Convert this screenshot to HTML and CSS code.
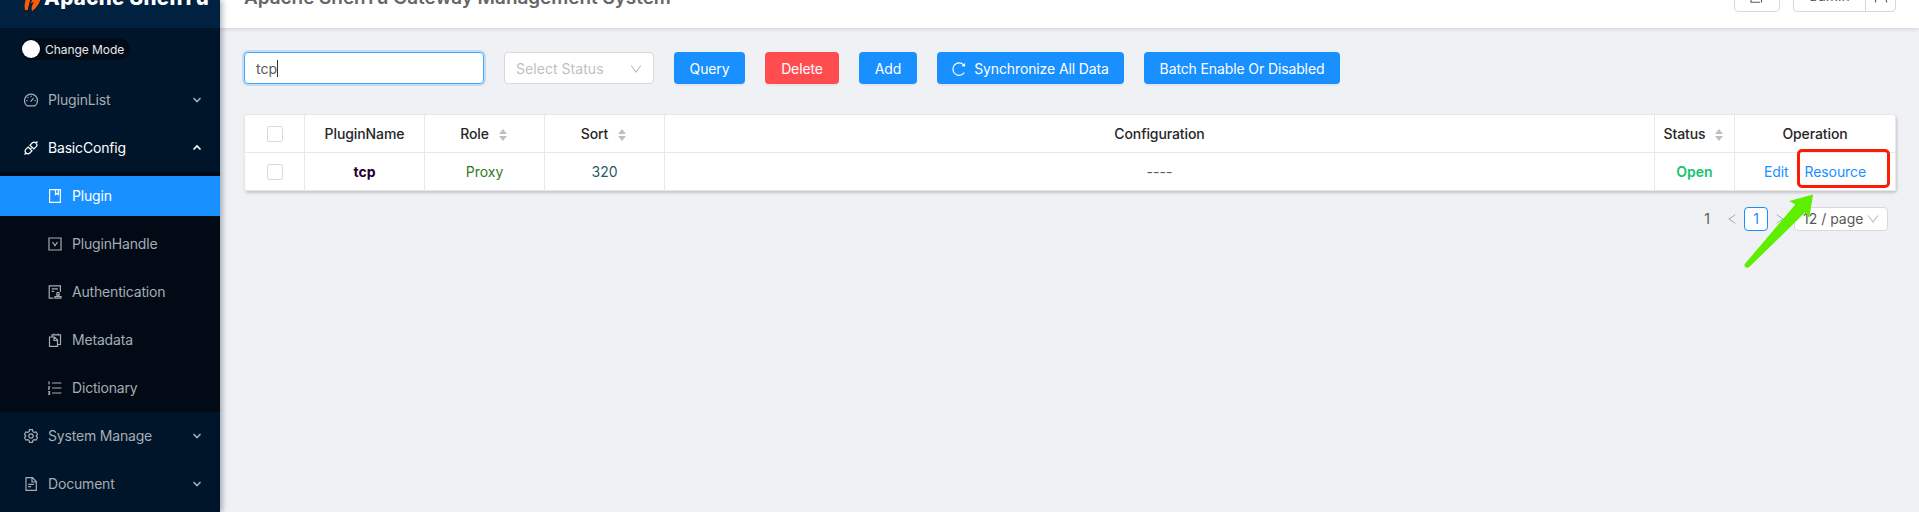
FILE: index.html
```html
<!DOCTYPE html>
<html lang="en">
<head>
<meta charset="utf-8">
<title>Apache ShenYu Gateway Management System</title>
<link rel="stylesheet" href="styles.css">
</head>
<body>
<div class="app">
  <aside class="sidebar">
    <div class="logo">
      <svg class="logo-mark" width="18" height="32" viewBox="0 0 18 32"><path d="M1 31C-.5 24 2 17 8 13L14 1l3 15c0 6-3 12-9 16-1-3 0-6 2-9-4 1-6 4-6 8z" fill="#ff5c00"/><path d="M5.500 30c-.5-5 1-9 4-12" stroke="#002140" stroke-width="1.500" fill="none"/></svg>
      <span class="logo-text">Apache ShenYu</span>
    </div>
    <div class="mode"><span class="knob"></span><span class="mode-text">Change Mode</span></div>
    <nav class="menu">
      <div class="item"><svg class="ico" viewBox="0 0 14 14"><path d="M3 12.800A6.500 6.500 0 1 1 11 12.800Z"/><path d="M6.500 8.700 9.700 5.200M7 2.800v1.200M3.600 4.200l.8.800M2.300 7.700h1.300M10.600 7.700h1.200"/></svg><span class="label">PluginList</span><svg class="chev" viewBox="0 0 10 10"><path d="M1.500 3 5 6.500 8.500 3"/></svg></div>
      <div class="item open"><svg class="ico" viewBox="0 0 14 14"><path d="M6 4.200 8.200 2a2.600 2.600 0 0 1 3.800 3.800L9.800 8Z M4.200 6 8 9.800 5.800 12A2.600 2.600 0 0 1 2 8.200Z M12 2l1.500-1.500M2 12 .5 13.500M6.300 8.100l1.200-1.200"/></svg><span class="label">BasicConfig</span><svg class="chev" viewBox="0 0 10 10"><path d="M1.500 6.500 5 3l3.500 3.500"/></svg></div>
      <div class="submenu">
        <div class="item sub active"><svg class="ico" viewBox="0 0 14 14"><path d="M1.600.6h10.800v12.800h-10.800ZM7.500.7v4.800l1.400-1 1.400 1v-4.800"/></svg><span class="label">Plugin</span></div>
        <div class="item sub"><svg class="ico" viewBox="0 0 14 14"><path d="M1 1h12v12H1ZM4.500 5 7 8.700 9.500 5"/></svg><span class="label">PluginHandle</span></div>
        <div class="item sub"><svg class="ico" viewBox="0 0 14 14"><path d="M5.500 13.200H1.200V.8h11.200v6M3.700 3.800h6.200M3.700 6.300h2.500M7 13.200h6v-1.700H7ZM8.800 11.500l.5-1.700M11.200 11.500l-.5-1.700"/><circle cx="10" cy="8.700" r="1.300"/></svg><span class="label">Authentication</span></div>
        <div class="item sub"><svg class="ico" viewBox="0 0 14 14"><path d="M1.500 4h5l3 3v6.300h-8ZM6 4v3.500h3.500M4 4V1.800h8.500v9.700h-3M6 .5v1.300M10 .5v1.300"/></svg><span class="label">Metadata</span></div>
        <div class="item sub"><svg class="ico" viewBox="0 0 14 14"><path d="M4 2h9.500M4 7h9.500M4 12h9.500M.3 1h.8v2.400M.2 5.800h1.300L.4 8.200h1.300M.2 10.600h1.300v2.800H.2M.5 12h1"/></svg><span class="label">Dictionary</span></div>
      </div>
      <div class="item"><svg class="ico" viewBox="0 0 14 14"><path d="M5.600.7h2.800l.5 1.900 1.300.8 1.900-.5 1.400 2.400L12.100 7l1.400 1.700-1.400 2.400-1.900-.5-1.300.8-.5 1.900H5.600l-.5-1.900-1.300-.8-1.900.5L.5 8.700 1.900 7 .5 5.300l1.400-2.400 1.900.5 1.300-.8Z"/><circle cx="7" cy="7" r="2.200"/></svg><span class="label">System Manage</span><svg class="chev" viewBox="0 0 10 10"><path d="M1.500 3 5 6.500 8.500 3"/></svg></div>
      <div class="item"><svg class="ico" viewBox="0 0 14 14"><path d="M2 .7h6.500L12.300 4.500v8.800H2ZM8 .7V5h4.300M4.200 7.300h5.600M4.200 9.700h3"/></svg><span class="label">Document</span><svg class="chev" viewBox="0 0 10 10"><path d="M1.500 3 5 6.500 8.500 3"/></svg></div>
    </nav>
  </aside>
  <main class="main">
    <header class="header">
      <h1 class="title">Apache ShenYu Gateway Management System</h1>
      <div class="actions">
        <div class="box lang"><svg class="hico" viewBox="0 0 14 14"><path d="M1 4v9.300h9M11.500 7v6.500M5 2h8"/></svg></div>
        <div class="box user"><span class="user-name">admin</span><span class="user-icon"><svg class="hico" viewBox="0 0 14 14"><circle cx="7" cy="4" r="3.200"/><path d="M1.300 13.500c.3-3.500 2.500-6 5.700-6s5.400 2.500 5.700 6"/></svg></span></div>
      </div>
    </header>
    <section class="content">
      <div class="toolbar">
        <div class="input">tcp<span class="caret"></span></div>
        <div class="select"><span>Select Status</span><svg class="arrow" viewBox="0 0 12 12"><path d="M1.200 2.500 6 9l4.800-6.500"/></svg></div>
        <button class="btn query">Query</button>
        <button class="btn danger">Delete</button>
        <button class="btn add">Add</button>
        <button class="btn sync"><svg class="reload" viewBox="0 0 14 14"><path d="M12.300 10.500A6.200 6.200 0 1 1 12 3.300"/><path d="m13.200.9-.2 3.900-3.500-.9Z" fill="currentColor" stroke="none"/></svg>Synchronize All Data</button>
        <button class="btn batch">Batch Enable Or Disabled</button>
      </div>
      <div class="table">
        <div class="cell"><span class="check"></span></div>
        <div class="cell head">PluginName</div>
        <div class="cell head">Role<svg class="sorter" viewBox="0 0 8 12"><path d="M4 0l4 5H0ZM4 12 0 7h8Z"/></svg></div>
        <div class="cell head">Sort<svg class="sorter" viewBox="0 0 8 12"><path d="M4 0l4 5H0ZM4 12 0 7h8Z"/></svg></div>
        <div class="cell head">Configuration</div>
        <div class="cell head">Status<svg class="sorter" viewBox="0 0 8 12"><path d="M4 0l4 5H0ZM4 12 0 7h8Z"/></svg></div>
        <div class="cell head">Operation</div>
        <div class="cell"><span class="check"></span></div>
        <div class="cell name">tcp</div>
        <div class="cell role">Proxy</div>
        <div class="cell sort">320</div>
        <div class="cell dashes">----</div>
        <div class="cell status">Open</div>
        <div class="cell ops"><a>Edit</a><a>Resource</a></div>
      </div>
      <div class="pager">
        <span class="total">1</span>
        <svg class="nav" viewBox="0 0 8 12"><path d="M7.300 1.800.8 6l6.500 4.200"/></svg>
        <span class="page">1</span>
        <svg class="nav next" viewBox="0 0 8 12"><path d="M.7 1.800 7.200 6 .7 10.200"/></svg>
        <span class="size">12 / page<svg class="arrow" viewBox="0 0 12 12"><path d="M1.200 2.500 6 9l4.800-6.500"/></svg></span>
      </div>
    </section>
  </main>
  <div class="highlight"></div>
  <svg class="pointer" width="72" height="76" viewBox="0 0 72 76"><path d="M69 1.500 45.300 8l6 3.500L.8 71c-1.300 2.500 2 5 4.500 3L61 19.500l4.300 5.500Z" fill="#5eee00"/></svg>
</div>
</body>
</html>
```
FILE: styles.css
```css
* { box-sizing: border-box; }
body { margin: 0; font: 14px/22px Inter, "Liberation Sans", sans-serif; color: #595959; }
svg { fill: none; stroke: currentColor; flex: none; }
.app { position: relative; display: flex; width: 1919px; height: 512px; overflow: hidden; background: #eff1f5; }

.sidebar { width: 220px; flex: none; background: #001529; box-shadow: 2px 0 6px rgba(0,21,41,.35); z-index: 2; }
.logo { height: 28px; display: flex; align-items: flex-end; padding-left: 24px; background: #002140; color: #fff; }
.logo-mark { stroke: none; margin-bottom: 17px; }
.logo-text { font-size: 20.5px; font-weight: 800; line-height: 28px; margin: 0 0 16px 2px; letter-spacing: .35px; white-space: nowrap; }
.mode { display: flex; align-items: center; width: 109px; height: 22px; margin: 10px 0 0 21px; padding-left: 1px; border-radius: 11px; background: #020c19; }
.knob { width: 18px; height: 18px; border-radius: 50%; background: #fff; }
.mode-text { padding-top: 1px; margin-left: 5px; font-size: 12px; color: #e6e8ea; letter-spacing: -.05px; white-space: nowrap; }

.menu { margin-top: 20px; }
.item { display: flex; align-items: center; height: 40px; margin-bottom: 8px; padding: 0 18px 0 24px; color: #a6adb4; }
.item.open { color: #fff; margin-bottom: 4px; }
.ico { width: 14px; height: 14px; stroke-width: 1.200; margin-right: 10px; }
.label { flex: 1; letter-spacing: -.18px; }
.chev { width: 10px; height: 10px; stroke-width: 1.600; }
.submenu { height: 240px; padding-top: 4px; margin-bottom: 4px; background: #010a15; }
.sub { padding-left: 48px; }
.sub.active { background: #1890ff; color: #fff; }

.main { flex: 1; min-width: 0; display: flex; flex-direction: column; }
.header { height: 28px; flex: none; display: flex; justify-content: space-between; align-items: flex-end; padding: 0 23px 0 24px; background: #fff; box-shadow: 0 1px 4px rgba(0,21,41,.14); }
.title { margin: 0 0 16px; font-size: 18.900px; line-height: 28px; font-weight: 600; color: #666; white-space: nowrap; }
.actions { display: flex; gap: 13px; margin-bottom: 16px; }
.box { display: flex; height: 32px; border: 1px solid #d9d9d9; border-radius: 4px; background: #fff; align-items: center; }
.lang { width: 46px; justify-content: center; }
.user { width: 103px; }
.user-name { width: 71px; text-align: center; }
.user-icon { flex: 1; height: 30px; display: flex; align-items: center; justify-content: center; border-left: 1px solid #d9d9d9; }
.hico { width: 14px; height: 14px; stroke-width: 1.100; }

.content { padding: 24px 23px 0 24px; }
.toolbar { display: flex; gap: 20px; }
.input, .select { height: 32px; display: flex; align-items: center; border-radius: 4px; background: #fff; }
.input { width: 240px; padding: 1px 0 0 11px; border: 1px solid #40a9ff; box-shadow: 0 0 0 2px rgba(24,144,255,.2); }
.caret { width: 1px; height: 17px; background: #333; }
.select { width: 150px; padding: 1px 11px 0; justify-content: space-between; border: 1px solid #d9d9d9; color: #bfbfbf; letter-spacing: .05px; }
.arrow { width: 12px; height: 12px; stroke: #bfbfbf; stroke-width: 1.100; }
.btn { height: 32px; display: flex; align-items: center; justify-content: center; padding: 1px 0 0; border: 0; border-radius: 4px; background: #1890ff; color: #fff; font: inherit; letter-spacing: -.12px; box-shadow: 0 2px 0 rgba(0,0,0,.045); white-space: nowrap; }
.query { width: 71px; }
.danger { width: 74px; background: #ff4d4f; }
.add { width: 58px; }
.sync { width: 187px; }
.batch { width: 196px; }
.reload { width: 14px; height: 14px; margin-right: 8px; stroke-width: 1.200; }

.table { display: grid; grid-template-columns: 60px 120px 120px 120px 990px 80px 1fr; grid-auto-rows: 38px; width: 1652px; margin-top: 30px; border: 1px solid #e8e8e8; border-right: 0; border-bottom: 0; border-radius: 4px; background: #fff; box-shadow: 1px 2px 3px rgba(0,0,0,.18); }
.cell { display: flex; align-items: center; justify-content: center; border-right: 1px solid #e8e8e8; border-bottom: 1px solid #e8e8e8; }
.head { font-weight: 500; color: #262626; letter-spacing: -.1px; }
.check { width: 16px; height: 16px; border: 1px solid #d9d9d9; border-radius: 2px; }
.sorter { width: 8px; height: 12px; margin: 2px 2px 0 10px; fill: #bfbfbf; stroke: none; }
.name { color: #260033; font-weight: 700; }
.role { color: #337a24; }
.sort { color: #1f5c69; }
.status { color: #14c56c; font-weight: 600; }
.ops { gap: 16px; color: #1890ff; letter-spacing: -.1px; }

.pager { display: flex; align-items: center; justify-content: flex-end; height: 24px; margin-top: 16px; padding-right: 8px; }
.total { margin-right: 18px; }
.nav { width: 8px; height: 12px; stroke: #aaa; stroke-width: 1; }
.page { width: 24px; height: 24px; margin: 0 8px; border: 1px solid #1890ff; border-radius: 4px; background: #fff; color: #1890ff; text-align: center; line-height: 22px; }
.next { margin-right: 10px; }
.size { display: flex; align-items: center; justify-content: space-between; width: 94px; height: 24px; padding: 0 8px; border: 1px solid #d9d9d9; border-radius: 4px; background: #fff; white-space: nowrap; }

.highlight { position: absolute; left: 1797px; top: 149px; width: 93px; height: 39px; border: 3px solid #fb1c08; border-radius: 5px; z-index: 3; }
.pointer { position: absolute; left: 1744px; top: 193px; stroke: none; z-index: 3; }
```
